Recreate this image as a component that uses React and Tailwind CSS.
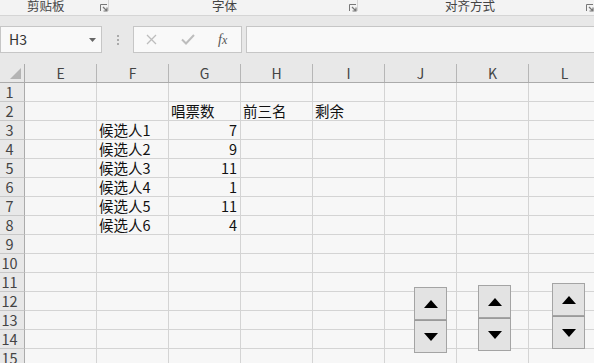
const cols = ["E", "F", "G", "H", "I", "J", "K", "L"];

// cell contents: row -> { col: [text, align] }
const data = {
  2: { G: ["唱票数", "l"], H: ["前三名", "l"], I: ["剩余", "l"] },
  3: { F: ["候选人1", "l"], G: ["7", "r"] },
  4: { F: ["候选人2", "l"], G: ["9", "r"] },
  5: { F: ["候选人3", "l"], G: ["11", "r"] },
  6: { F: ["候选人4", "l"], G: ["1", "r"] },
  7: { F: ["候选人5", "l"], G: ["11", "r"] },
  8: { F: ["候选人6", "l"], G: ["4", "r"] },
};

const rows = Array.from({ length: 15 }, (_, i) => i + 1);

const Launcher = () => (
  <svg width="8" height="8" viewBox="0 0 8 8" className="shrink-0">
    <path d="M0.5 7V0.5H7" fill="none" stroke="#777" strokeWidth="1" />
    <path d="M3 3L7 7M7 3.5V7H3.5" fill="none" stroke="#777" strokeWidth="1.2" />
  </svg>
);

const Spinner = ({ className }) => (
  <div className={`absolute flex flex-col w-[33px] ${className}`}>
    <div className="h-[33px] bg-[#e3e3e3] border border-[#a4a4a4] flex items-center justify-center">
      <svg width="14" height="8" viewBox="0 0 14 8">
        <path d="M7 0L14 8H0Z" fill="#000" />
      </svg>
    </div>
    <div className="h-[33px] bg-[#e3e3e3] border border-[#a4a4a4] border-t-[#9a9a9a] flex items-center justify-center">
      <svg width="14" height="8" viewBox="0 0 14 8">
        <path d="M0 0H14L7 8Z" fill="#000" />
      </svg>
    </div>
  </div>
);

export default function App() {
  return (
    <div
      className="relative w-[594px] h-[363px] overflow-hidden bg-[#e8e8e8]"
      style={{ fontFamily: '"Noto Sans CJK SC", "Noto Sans", sans-serif' }}
    >
      {/* ribbon group labels */}
      <div className="flex h-[16px] bg-[#f3f3f3] border-b border-[#d5d5d5] text-[12.5px] leading-[13px] text-[#444]">
        <div className="w-[114px] flex items-start border-r border-[#d5d5d5] h-[11px]">
          <span className="ml-[27px] -mt-[1px] w-[73px]">剪贴板</span>
          <span className="mt-[4px]"><Launcher /></span>
        </div>
        <div className="w-[249px] flex items-start border-r border-[#d5d5d5] h-[11px]">
          <span className="ml-[103px] -mt-[1px] w-[137px]">字体</span>
          <span className="mt-[4px]"><Launcher /></span>
        </div>
        <div className="flex-1 flex items-start h-[11px]">
          <span className="ml-[87px] -mt-[1px] w-[141px]">对齐方式</span>
          <span className="mt-[4px]"><Launcher /></span>
        </div>
      </div>

      {/* formula bar */}
      <div className="flex h-[27px] mt-[10px] items-stretch">
        <div className="w-[102px] bg-[#f9f9f9] border border-[#c6c6c6] flex items-center justify-between pl-[8px] pr-[5px] text-[14px] text-[#333]">
          <span>H3</span>
          <svg width="7" height="4" viewBox="0 0 7 4">
            <path d="M0 0H7L3.5 4Z" fill="#666" />
          </svg>
        </div>
        <div className="w-[31px] flex flex-col items-center justify-center gap-[2px]">
          <span className="w-[2px] h-[2px] bg-[#aaa]"></span>
          <span className="w-[2px] h-[2px] bg-[#aaa]"></span>
          <span className="w-[2px] h-[2px] bg-[#aaa]"></span>
        </div>
        <div className="w-[109px] bg-[#f9f9f9] border border-[#c6c6c6] flex items-center">
          <svg width="11" height="11" viewBox="0 0 11 11" className="ml-[12px]">
            <path d="M1 1L10 10M10 1L1 10" stroke="#bdbdbd" strokeWidth="1.3" fill="none" />
          </svg>
          <svg width="14" height="11" viewBox="0 0 14 11" className="ml-[24px]">
            <path d="M1 5.5L5 9.5L13 1" stroke="#bdbdbd" strokeWidth="2" fill="none" />
          </svg>
          <span
            className="ml-[23px] text-[14px] italic text-[#555]"
            style={{ fontFamily: '"Liberation Serif", serif' }}
          >
            f<span className="text-[12px]">x</span>
          </span>
        </div>
        <div className="flex-1 ml-[4px] bg-[#f9f9f9] border border-[#c6c6c6] border-r-0"></div>
      </div>

      {/* grid */}
      <div className="mt-[11px]">
        <div className="flex h-[19px] border-b border-[#ababab] text-[14px] leading-[18px] text-[#444]">
          <div className="w-[25px] shrink-0 border-r border-[#ababab] flex items-end justify-end pr-[3px] pb-[3px]">
            <svg width="11" height="11" viewBox="0 0 11 11">
              <path d="M11 0V11H0Z" fill="#b4b4b4" />
            </svg>
          </div>
          {cols.map((c) => (
            <div key={c} className="w-[72px] shrink-0 border-r border-[#b6b6b6] text-center">
              {c}
            </div>
          ))}
        </div>
        {rows.map((r) => (
          <div key={r} className="flex h-[19px] text-[14.5px] leading-[18px]">
            <div className="w-[25px] shrink-0 border-r border-[#ababab] border-b border-b-[#c8c8c8] bg-[#e8e8e8] text-[#444] text-center pr-[5px]">
              {r}
            </div>
            {cols.map((c) => {
              const cell = data[r] && data[r][c];
              return (
                <div
                  key={c}
                  className={`w-[72px] shrink-0 bg-[#f7f7f7] border-r border-b border-[#d4d4d4] overflow-visible whitespace-nowrap text-[#111] ${
                    cell && cell[1] === "r" ? "text-right pr-[3px]" : "pl-[2px]"
                  }`}
                >
                  {cell ? cell[0] : ""}
                </div>
              );
            })}
          </div>
        ))}
      </div>

      <Spinner className="left-[414px] top-[287px]" />
      <Spinner className="left-[478px] top-[285px]" />
      <Spinner className="left-[552px] top-[283px]" />
    </div>
  );
}
